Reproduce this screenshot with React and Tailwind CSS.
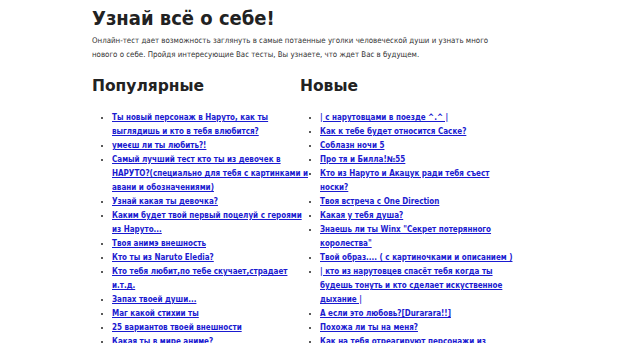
const POPULAR = [
  'Ты новый персонаж в Наруто, как ты выглядишь и кто в тебя влюбится?',
  'умеєш ли ты любить?!',
  'Самый лучший тест кто ты из девочек в НАРУТО?(специально для тебя с картинками и авани и обозначениями)',
  'Узнай какая ты девочка?',
  'Каким будет твой первый поцелуй с героями из Наруто...',
  'Твоя анимэ внешность',
  'Кто ты из Naruto Eledia?',
  'Кто тебя любит,по тебе скучает,страдает и.т.д.',
  'Запах твоей души...',
  'Маг какой стихии ты',
  '25 вариантов твоей внешности',
  'Какая ты в мире аниме?',
]

const NEW = [
  '| с нарутовцами в поезде ^.^ |',
  'Как к тебе будет относится Саске?',
  'Соблазн ночи 5',
  'Про тя и Билла!№55',
  'Кто из Наруто и Акацук ради тебя съест носки?',
  'Твоя встреча с One Direction',
  'Какая у тебя душа?',
  'Знаешь ли ты Winx "Секрет потерянного королества"',
  'Твой образ.... ( с картиночками и описанием )',
  '| кто из нарутовцев спасёт тебя когда ты будешь тонуть и кто сделает искуственное дыхание |',
  'А если это любовь?[Durarara!!]',
  'Похожа ли ты на меня?',
  'Как на тебя отреагируют персонажи из Наруто?',
]

function Column({ title, items, listWidth }) {
  return (
    <div className="w-[208px] shrink-0">
      <h2 className="font-['DejaVu_Sans',sans-serif] text-[15.5px] font-bold text-[#222] leading-[20px] mb-[15px]">{title}</h2>
      <ul className={`list-disc pl-[20px] text-[8px] leading-[14px] ${listWidth}`}>
        {items.map((t, i) => (
          <li key={i} className="text-[#222]">
            <a href="#" className="text-[#1a1ad0] font-bold underline">{t}</a>
          </li>
        ))}
      </ul>
    </div>
  )
}

export default function App() {
  return (
    <div className="w-[620px] h-[343px] overflow-hidden bg-white" style={{ fontFamily: '"DejaVu Sans Condensed", "DejaVu Sans", Verdana, sans-serif' }}>
      <div className="pl-[92px] pt-[4px]">
        <h1 className="text-[20px] font-bold text-[#222] leading-[28px]">Узнай всё о себе!</h1>
        <p className="mt-[2px] w-[418px] text-[7.85px] leading-[14px] text-[#333]">
          Онлайн-тест дает возможность заглянуть в самые потаенные уголки человеческой души и узнать много
          нового о себе. Пройдя интересующие Вас тесты, Вы узнаете, что ждет Вас в будущем.
        </p>
        <div className="flex mt-[14px]">
          <Column title="Популярные" items={POPULAR} listWidth="w-[216px]" />
          <Column title="Новые" items={NEW} listWidth="w-[216px]" />
        </div>
      </div>
    </div>
  )
}
